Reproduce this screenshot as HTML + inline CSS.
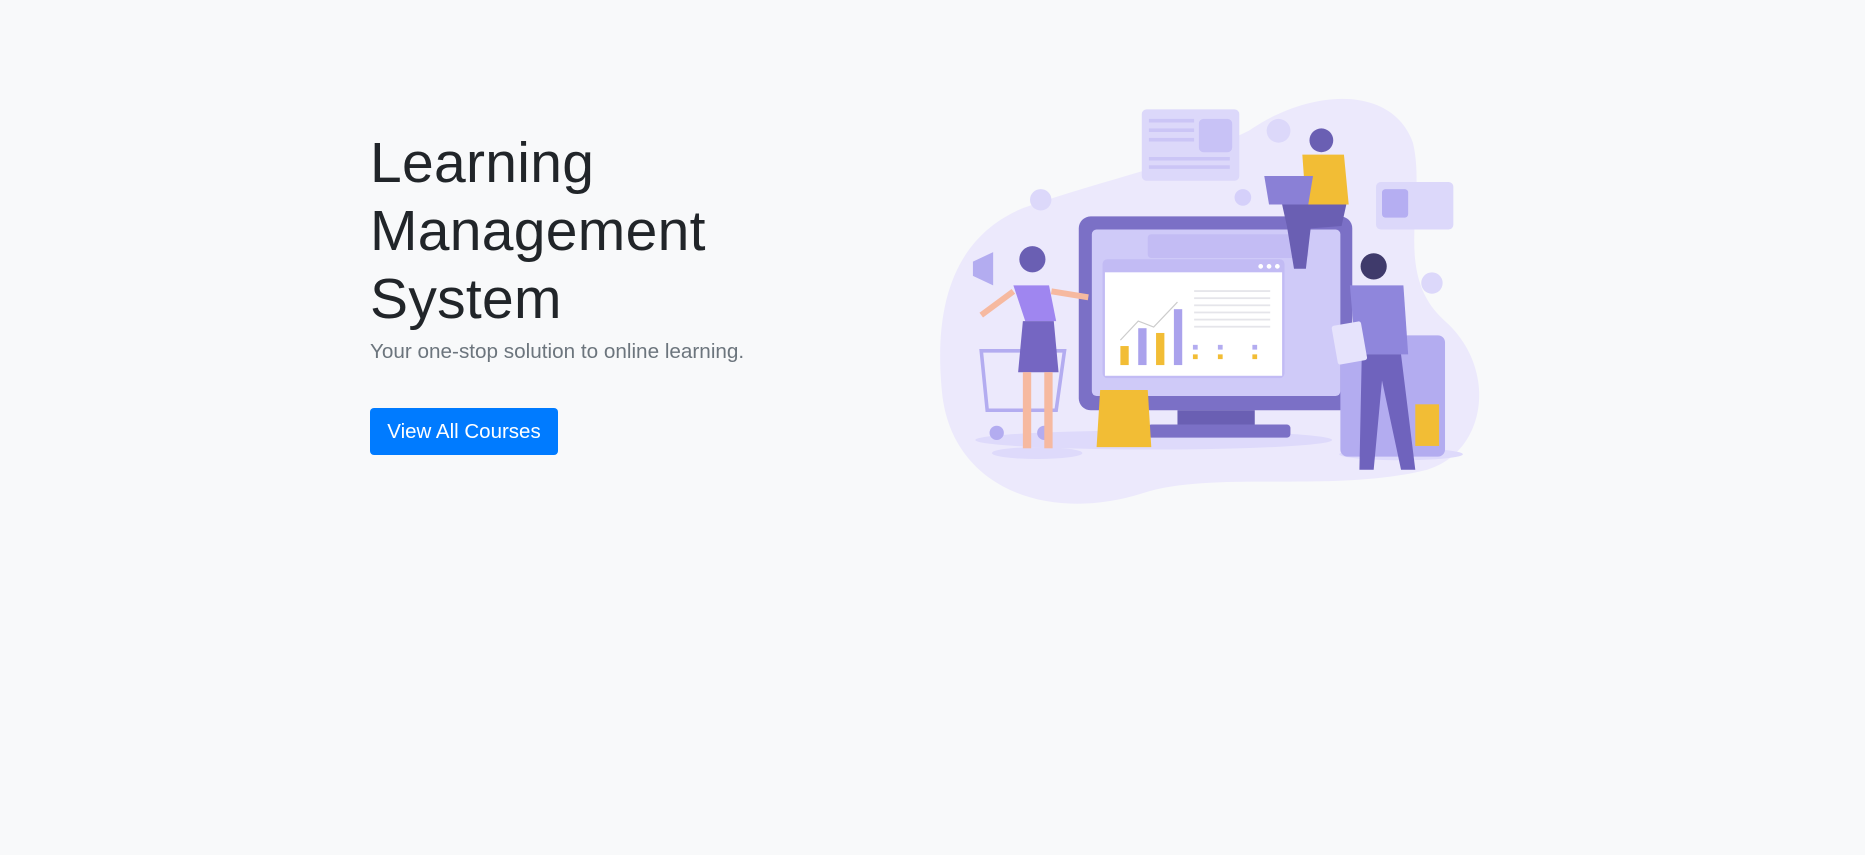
<!DOCTYPE html>
<html><head><meta charset="utf-8"><style>
html,body{margin:0;padding:0;width:1865px;height:855px;background:#f8f9fa;overflow:hidden}
.h{position:absolute;left:370px;top:129px;font-family:"Liberation Sans",sans-serif;font-size:57px;line-height:68px;color:#212529;font-weight:400;margin:0;letter-spacing:0.3px}
.p{position:absolute;left:370px;top:340px;font-family:"Liberation Sans",sans-serif;font-size:20.7px;color:#6c757d;margin:0}
.b{position:absolute;left:370px;top:408px;width:188px;height:47px;background:#007bff;border-radius:4px;color:#fff;font-family:"Liberation Sans",sans-serif;font-size:20.5px;line-height:47px;text-align:center}
svg{position:absolute;left:0;top:0}
</style></head><body>
<h1 class="h">Learning<br>Management<br>System</h1>
<p class="p">Your one-stop solution to online learning.</p>
<div class="b">View All Courses</div>
<svg width="1865" height="855" viewBox="0 0 1568 719">
<path d="M860 175 C930 150 990 140 1050 110 C1100 75 1170 70 1188 120 C1200 170 1170 230 1215 270 C1260 310 1250 380 1200 395 C1120 415 1020 395 960 415 C880 440 800 410 792 330 C785 260 800 200 860 175Z" fill="#ece9fc"/>
<rect x="960" y="92" width="82" height="60" rx="4" fill="#dcd8fa"/>
<rect x="1008" y="100" width="28" height="28" rx="4" fill="#c8c2f6"/>
<rect x="966" y="100" width="38" height="3" fill="#cbc5f6"/><rect x="966" y="108" width="38" height="3" fill="#cbc5f6"/><rect x="966" y="116" width="38" height="3" fill="#cbc5f6"/><rect x="966" y="132" width="68" height="3" fill="#cbc5f6"/><rect x="966" y="139" width="68" height="3" fill="#cbc5f6"/>
<rect x="1157" y="153" width="65" height="40" rx="4" fill="#dcd8fa"/>
<rect x="1162" y="159" width="22" height="24" rx="3" fill="#b5aef2"/>
<circle cx="1075" cy="110" r="10" fill="#dcd8fa"/><circle cx="875" cy="168" r="9" fill="#dcd8fa"/><circle cx="1045" cy="166" r="7" fill="#d5d0fa"/><circle cx="1204" cy="238" r="9" fill="#dcd8fa"/>
<ellipse cx="970" cy="370" rx="150" ry="8" fill="#dedafb"/>
<ellipse cx="872" cy="381" rx="38" ry="5" fill="#dedafb"/>
<ellipse cx="1178" cy="382" rx="52" ry="5" fill="#dedafb"/>
<rect x="907" y="182" width="230" height="163" rx="10" fill="#7b70c6"/>
<rect x="918" y="193" width="209" height="140" rx="4" fill="#cfcaf8"/>
<rect x="965" y="197" width="135" height="20" rx="3" fill="#c3bcf4"/>
<rect x="990" y="345" width="65" height="13" fill="#6a5fb3"/>
<rect x="965" y="357" width="120" height="11" rx="3" fill="#7b70c6"/>
<rect x="927" y="218" width="153" height="100" rx="4" fill="#c2bbf4"/>
<rect x="929" y="229" width="149" height="87" fill="#fff"/>
<circle cx="1060" cy="224" r="2" fill="#fff"/><circle cx="1067" cy="224" r="2" fill="#fff"/><circle cx="1074" cy="224" r="2" fill="#fff"/>
<rect x="942" y="291" width="7" height="16" fill="#f2bd35"/><rect x="957" y="276" width="7" height="31" fill="#aaa2ec"/><rect x="972" y="280" width="7" height="27" fill="#f2bd35"/><rect x="987" y="260" width="7" height="47" fill="#aaa2ec"/>
<path d="M942 286 L957 270 L970 275 L990 254" stroke="#ccc" fill="none"/>
<g fill="#e5e5ea"><rect x="1004" y="244" width="64" height="1.5"/><rect x="1004" y="250" width="64" height="1.5"/><rect x="1004" y="256" width="64" height="1.5"/><rect x="1004" y="262" width="64" height="1.5"/><rect x="1004" y="268" width="64" height="1.5"/><rect x="1004" y="274" width="64" height="1.5"/></g>
<g fill="#b3acf0"><rect x="1003" y="290" width="4" height="4"/><rect x="1024" y="290" width="4" height="4"/><rect x="1053" y="290" width="4" height="4"/></g>
<g fill="#f2bd35"><rect x="1003" y="298" width="4" height="4"/><rect x="1024" y="298" width="4" height="4"/><rect x="1053" y="298" width="4" height="4"/></g>
<rect x="1127" y="282" width="88" height="102" rx="6" fill="#b3acf0"/>
<rect x="1190" y="340" width="20" height="35" fill="#f2bd35"/>
<path d="M925 328 L965 328 L968 376 L922 376Z" fill="#f2bd35"/>
<path d="M825 295 L895 295 L888 345 L830 345Z" fill="none" stroke="#b3acf0" stroke-width="3"/>
<circle cx="838" cy="364" r="6" fill="#b3acf0"/><circle cx="878" cy="364" r="6" fill="#b3acf0"/>
<path d="M818 220 L835 212 L835 240 L818 232Z" fill="#b3acf0"/>
<circle cx="868" cy="218" r="11" fill="#6a5fb3"/>
<path d="M852 240 L882 240 L888 270 L862 270Z" fill="#9f86f0"/>
<path d="M860 270 L886 270 L890 313 L856 313Z" fill="#7566c2"/>
<rect x="860" y="313" width="7" height="64" fill="#f6b9a0"/><rect x="878" y="313" width="7" height="64" fill="#f6b9a0"/>
<path d="M852 245 L825 265 M884 245 L915 250" stroke="#f6b9a0" stroke-width="5" fill="none"/>
<circle cx="1111" cy="118" r="10" fill="#6a5fb3"/>
<path d="M1095 130 L1130 130 L1134 172 L1098 172Z" fill="#f2bd35"/>
<path d="M1063 148 L1104 148 L1100 172 L1067 172Z" fill="#8a80d6"/>
<path d="M1078 172 L1132 172 L1128 190 L1102 192 L1098 226 L1088 226 L1082 190Z" fill="#6a5fb3"/>
<circle cx="1155" cy="224" r="11" fill="#3f3a6b"/>
<path d="M1135 240 L1180 240 L1184 298 L1140 298Z" fill="#8f86dc"/>
<path d="M1145 298 L1178 298 L1190 395 L1178 395 L1162 320 L1155 395 L1143 395Z" fill="#6f63bd"/>
<rect x="1122" y="272" width="25" height="33" rx="2" fill="#e6e3fc" transform="rotate(-10 1134 288)"/>
</svg>
</body></html>
